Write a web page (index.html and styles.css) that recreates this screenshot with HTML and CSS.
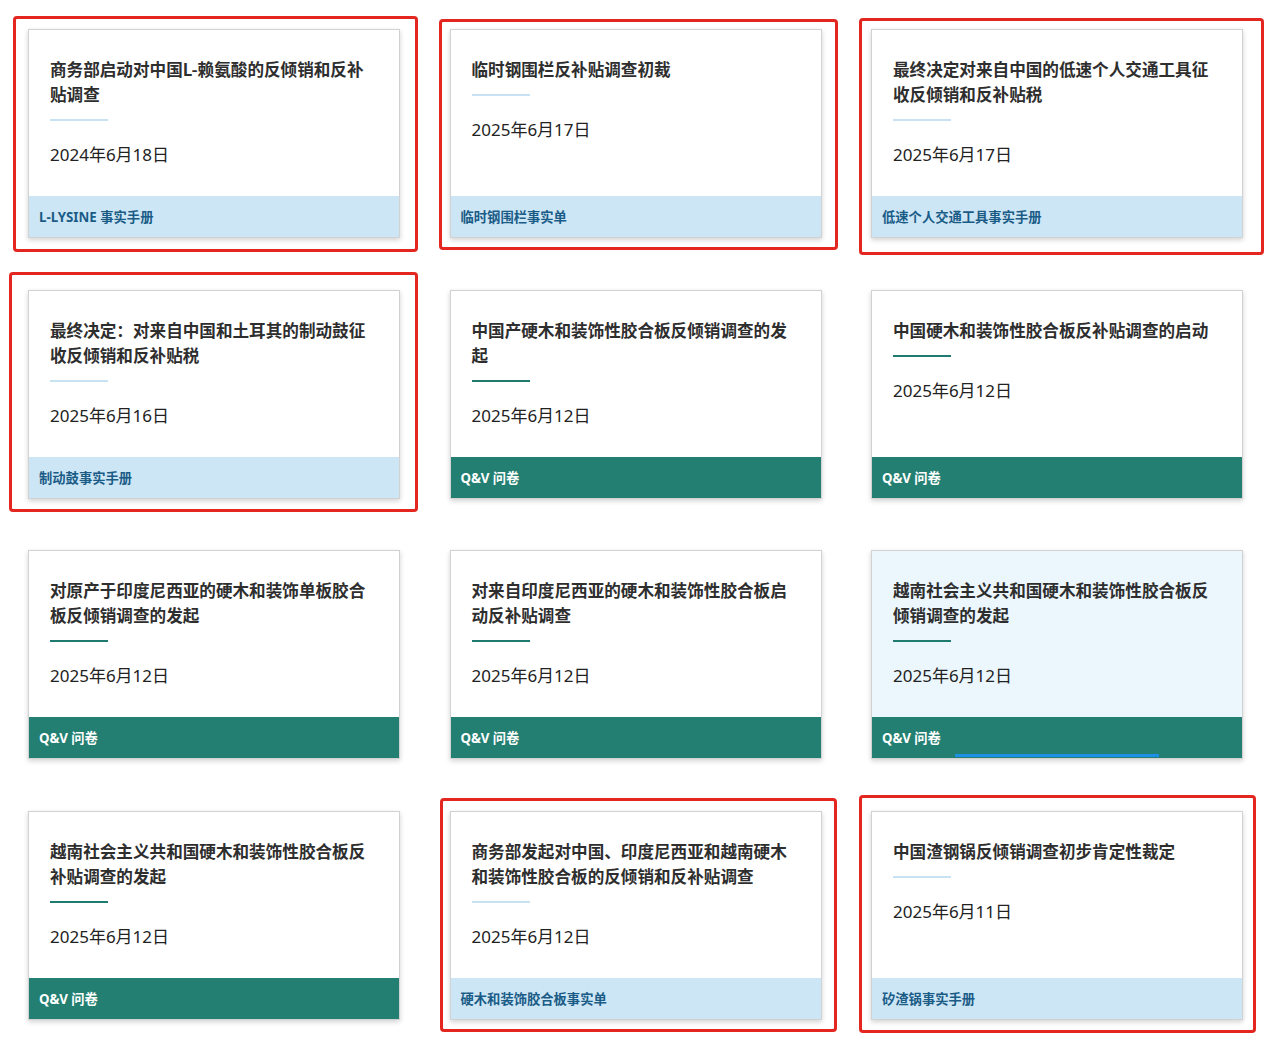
FILE: index.html
```html
<!DOCTYPE html>
<html lang="zh-CN">
<head>
    <meta charset="UTF-8">
    <meta name="viewport" content="width=device-width, initial-scale=1.0">
    <link rel="stylesheet" href="styles.css">
</head>
<body>
    <div class="card-grid">
        <a class="card fact" href="#">
            <div class="card-body">
                <h3 class="card-title">商务部启动对中国L-赖氨酸的反倾销和反补贴调查</h3>
                <div class="divider"></div>
                <div class="card-date">2024年6月18日</div>
            </div>
            <div class="card-footer">L-LYSINE 事实手册</div>
            <span class="mark mark-1"></span>
        </a>
        <a class="card fact" href="#">
            <div class="card-body">
                <h3 class="card-title">临时钢围栏反补贴调查初裁</h3>
                <div class="divider"></div>
                <div class="card-date">2025年6月17日</div>
            </div>
            <div class="card-footer">临时钢围栏事实单</div>
            <span class="mark mark-2"></span>
        </a>
        <a class="card fact" href="#">
            <div class="card-body">
                <h3 class="card-title">最终决定对来自中国的低速个人交通工具征收反倾销和反补贴税</h3>
                <div class="divider"></div>
                <div class="card-date">2025年6月17日</div>
            </div>
            <div class="card-footer">低速个人交通工具事实手册</div>
            <span class="mark mark-3"></span>
        </a>

        <a class="card fact" href="#">
            <div class="card-body">
                <h3 class="card-title">最终决定：对来自中国和土耳其的制动鼓征收反倾销和反补贴税</h3>
                <div class="divider"></div>
                <div class="card-date">2025年6月16日</div>
            </div>
            <div class="card-footer">制动鼓事实手册</div>
            <span class="mark mark-4"></span>
        </a>
        <a class="card survey" href="#">
            <div class="card-body">
                <h3 class="card-title">中国产硬木和装饰性胶合板反倾销调查的发起</h3>
                <div class="divider"></div>
                <div class="card-date">2025年6月12日</div>
            </div>
            <div class="card-footer">Q&amp;V 问卷</div>
        </a>
        <a class="card survey" href="#">
            <div class="card-body">
                <h3 class="card-title">中国硬木和装饰性胶合板反补贴调查的启动</h3>
                <div class="divider"></div>
                <div class="card-date">2025年6月12日</div>
            </div>
            <div class="card-footer">Q&amp;V 问卷</div>
        </a>

        <a class="card survey" href="#">
            <div class="card-body">
                <h3 class="card-title">对原产于印度尼西亚的硬木和装饰单板胶合板反倾销调查的发起</h3>
                <div class="divider"></div>
                <div class="card-date">2025年6月12日</div>
            </div>
            <div class="card-footer">Q&amp;V 问卷</div>
        </a>
        <a class="card survey" href="#">
            <div class="card-body">
                <h3 class="card-title">对来自印度尼西亚的硬木和装饰性胶合板启动反补贴调查</h3>
                <div class="divider"></div>
                <div class="card-date">2025年6月12日</div>
            </div>
            <div class="card-footer">Q&amp;V 问卷</div>
        </a>
        <a class="card survey hover" href="#">
            <div class="card-body">
                <h3 class="card-title">越南社会主义共和国硬木和装饰性胶合板反倾销调查的发起</h3>
                <div class="divider"></div>
                <div class="card-date">2025年6月12日</div>
            </div>
            <div class="card-footer">Q&amp;V 问卷<span class="underline"></span></div>
        </a>

        <a class="card survey" href="#">
            <div class="card-body">
                <h3 class="card-title">越南社会主义共和国硬木和装饰性胶合板反补贴调查的发起</h3>
                <div class="divider"></div>
                <div class="card-date">2025年6月12日</div>
            </div>
            <div class="card-footer">Q&amp;V 问卷</div>
        </a>
        <a class="card fact" href="#">
            <div class="card-body">
                <h3 class="card-title">商务部发起对中国、印度尼西亚和越南硬木和装饰性胶合板的反倾销和反补贴调查</h3>
                <div class="divider"></div>
                <div class="card-date">2025年6月12日</div>
            </div>
            <div class="card-footer">硬木和装饰胶合板事实单</div>
            <span class="mark mark-5"></span>
        </a>
        <a class="card fact" href="#">
            <div class="card-body">
                <h3 class="card-title">中国渣钢锅反倾销调查初步肯定性裁定</h3>
                <div class="divider"></div>
                <div class="card-date">2025年6月11日</div>
            </div>
            <div class="card-footer">矽渣锅事实手册</div>
            <span class="mark mark-6"></span>
        </a>
    </div>
</body>
</html>
```

FILE: styles.css
```css
* {
    margin: 0;
    padding: 0;
    box-sizing: border-box;
}

html,
body {
    min-height: 100%;
}

body {
    background: #ffffff;
    font-family: "Noto Sans", "Noto Sans CJK SC", sans-serif;
    color: #222;
}

.card-grid {
    display: grid;
    grid-template-columns: repeat(3, 372px);
    grid-auto-rows: 209px;
    column-gap: 49.5px;
    row-gap: 51.5px;
    padding: 29px 0 38px 28px;
}

.card {
    position: relative;
    display: flex;
    flex-direction: column;
    background: #ffffff;
    border: 1px solid #d2d2d2;
    box-shadow: 0 2px 5px rgba(0, 0, 0, 0.18);
    text-decoration: none;
    color: inherit;
}

.card.hover {
    background: #ebf6fd;
}

.card-body {
    flex: 1;
    padding: 27px 21px 0;
}

.card-title {
    font-family: "Noto Sans CJK SC", sans-serif;
    font-size: 16.6px;
    line-height: 25px;
    font-weight: 700;
    color: #2e2e2e;
}

.divider {
    width: 58px;
    height: 2px;
    margin-top: 12px;
    background: #c6e2f3;
}

.survey .divider {
    background: #1f7b6f;
}

.card-date {
    margin-top: 22px;
    font-size: 17px;
    line-height: 24px;
    color: #222;
}

.card-footer {
    position: relative;
    height: 41px;
    display: flex;
    align-items: center;
    padding: 0 10px;
    font-family: "Noto Sans", "Noto Sans CJK SC", sans-serif;
    font-size: 13.3px;
    font-weight: 700;
}

.fact .card-footer {
    background: #cde6f6;
    color: #1a5c86;
}

.survey .card-footer {
    background: #227f72;
    color: #ffffff;
}

.underline {
    position: absolute;
    left: 83px;
    bottom: 1px;
    width: 204px;
    height: 3px;
    background: #1c8fe6;
}

/* red annotation boxes */
.mark {
    position: absolute;
    border: 3px solid #e3261f;
    border-radius: 4px;
    pointer-events: none;
}

.mark-1 { top: -14px; left: -16px; right: -19px; bottom: -15px; }
.mark-2 { top: -11px; left: -12px; right: -17px; bottom: -13px; }
.mark-3 { top: -12px; left: -13px; right: -22px; bottom: -18px; }
.mark-4 { top: -19px; left: -20px; right: -19px; bottom: -14px; }
.mark-5 { top: -14px; left: -11px; right: -16px; bottom: -13px; }
.mark-6 { top: -17px; left: -13px; right: -14px; bottom: -14px; }
```
